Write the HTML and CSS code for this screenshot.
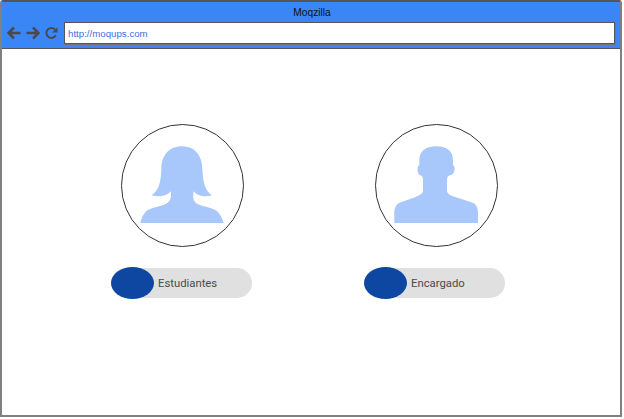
FILE: index.html
```html
<!DOCTYPE html>
<html lang="es">
<head>
    <meta charset="UTF-8">
    <meta name="viewport" content="width=device-width, initial-scale=1.0">
    <title>Moqzilla</title>
    <link rel="stylesheet" href="styles.css">
</head>
<body>
    <div class="browser">
        <div class="browser-bar">
            <div class="browser-title">Moqzilla</div>
            <div class="browser-nav">
                <svg class="nav-icon" width="14" height="14" viewBox="0 0 14 14">
                    <path d="M13.5 7H2M7 1.5 1.5 7 7 12.5"/>
                </svg>
                <svg class="nav-icon" width="14" height="14" viewBox="0 0 14 14">
                    <path d="M.5 7H12M7 1.5 12.5 7 7 12.5"/>
                </svg>
                <svg class="nav-icon nav-reload" width="13" height="14" viewBox="0 0 13 14">
                    <path d="M10.8 9.3A5 5 0 1 1 10.2 3.6"/>
                    <path class="nav-fill" d="M12.5 1.2v5.3H7.2z"/>
                </svg>
                <div class="address-bar">http://moqups.com</div>
            </div>
        </div>
        <div class="content">
            <div class="profile">
                <div class="avatar">
                    <svg width="123" height="123" viewBox="64 26 369 369">
                        <path class="silhouette" d="M247 93C208 93 186 120 185 160C184 200 178 225 155 240C175 245 200 245 213 228C216 245 213 258 200 265C175 275 150 278 140 287C130 297 125 310 122 323H372C368 310 362 297 352 287C342 278 315 275 292 265C280 258 279 245 282 228C295 245 320 245 337 240C315 225 310 200 308 160C307 120 286 93 247 93Z"/>
                    </svg>
                </div>
                <div class="toggle">
                    <span class="toggle-knob"></span>
                    <span class="toggle-label">Estudiantes</span>
                </div>
            </div>
            <div class="profile">
                <div class="avatar avatar-right">
                    <svg width="123" height="123" viewBox="61 26 369 369">
                        <path class="silhouette" d="M245 93C212 93 194 108 194 135V150C186 152 187 178 197 180C203 181 204 185 205 192V225C205 235 195 240 185 244L135 262C122 268 119 280 119 295V323H370V295C370 280 367 268 354 262L295 243C285 240 277 235 277 225V192C278 185 280 181 286 180C302 178 303 152 295 150V135C295 108 278 93 245 93Z"/>
                    </svg>
                </div>
                <div class="toggle">
                    <span class="toggle-knob"></span>
                    <span class="toggle-label">Encargado</span>
                </div>
            </div>
        </div>
    </div>
</body>
</html>
```

FILE: styles.css
```css
html, body {
    margin: 0;
    padding: 0;
    background-color: #fff;
}
.browser {
    box-sizing: border-box;
    width: 622px;
    height: 417px;
    border: 2px solid #808080;
    border-top-color: #555;
    border-radius: 3px 3px 0 0;
    font-family: "Liberation Sans", Arial, sans-serif;
}
.browser-bar {
    box-sizing: border-box;
    height: 47px;
    padding-top: 4px;
    background-color: #3b86f7;
    border-bottom: 1px solid #555;
}
.browser-title {
    height: 16px;
    line-height: 13px;
    padding-left: 2px;
    font-size: 10.2px;
    text-align: center;
    color: #111;
}
.browser-nav {
    display: flex;
    align-items: center;
    gap: 5px;
    padding: 0 5px;
}
.nav-icon {
    flex: none;
    fill: none;
    stroke: #4a4a4a;
    stroke-width: 2.5;
}
.nav-reload {
    stroke-width: 2;
}
.nav-fill {
    fill: #4a4a4a;
    stroke: none;
}
.address-bar {
    box-sizing: border-box;
    flex: 1;
    height: 22px;
    line-height: 21px;
    margin-left: 1px;
    padding-left: 3px;
    font-size: 9.7px;
    color: #3f6fd8;
    background-color: #fff;
    border: 1px solid #555;
    box-shadow: 1px 1px 0 #777;
}
.content {
    display: flex;
    gap: 112px;
    padding: 75px 0 0 109px;
}
.profile {
    display: flex;
    flex-direction: column;
    align-items: center;
    width: 141px;
}
.avatar {
    box-sizing: border-box;
    width: 123px;
    height: 123px;
    margin-left: 1px;
    border: 1px solid #333;
    border-radius: 50%;
}
.avatar-right {
    margin-left: 3px;
}
.avatar svg {
    display: block;
    margin: -1px;
}
.silhouette {
    fill: #a8c7fa;
}
.toggle {
    display: flex;
    align-items: center;
    box-sizing: border-box;
    width: 141px;
    height: 30px;
    margin-top: 21px;
    background-color: #e0e0e0;
    border-radius: 15px;
}
.toggle-knob {
    flex: none;
    width: 43px;
    height: 32px;
    background-color: #0d47a1;
    border-radius: 50%;
}
.toggle-label {
    margin-left: 4px;
    font-family: Roboto, sans-serif;
    font-size: 11.3px;
    color: #4a4a4a;
}
```
